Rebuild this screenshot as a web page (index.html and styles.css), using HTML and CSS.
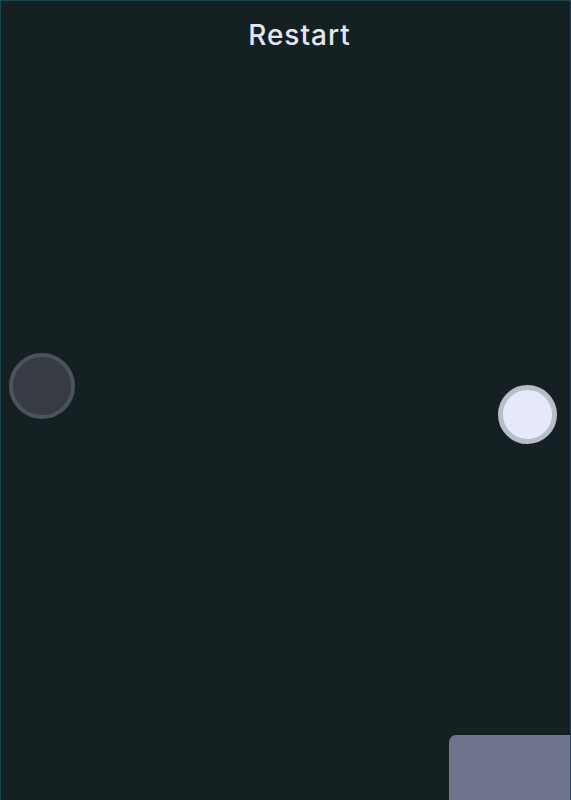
FILE: index.html
```html
<!DOCTYPE html>
<html>
<head>
<meta charset="utf-8">
<link rel="stylesheet" href="styles.css">
</head>
<body>
<div class="stage">
  <header class="top">
    <button class="restart">Restart</button>
  </header>
  <div class="ball ball-dark"></div>
  <div class="ball ball-light"></div>
  <div class="panel"></div>
</div>
</body>
</html>
```
FILE: styles.css
```css
html, body {
  margin: 0;
  padding: 0;
  height: 100%;
  background: #152022;
}
.stage {
  position: relative;
  box-sizing: border-box;
  width: 571px;
  height: 800px;
  border: 1px solid #1d4550;
  border-bottom: none;
  background: #152022;
  overflow: hidden;
}
.top {
  display: flex;
  justify-content: center;
  padding-top: 16px;
  padding-left: 28px;
}
.restart {
  background: none;
  border: none;
  padding: 0;
  color: #e4e7f3;
  font-family: Inter, "Open Sans", sans-serif;
  font-size: 28px;
  font-weight: 500;
  letter-spacing: 1px;
  line-height: 36px;
}
.ball {
  position: absolute;
  box-sizing: border-box;
  border-radius: 50%;
}
.ball-dark {
  left: 8px;
  top: 352px;
  width: 66px;
  height: 66px;
  background: #363b44;
  border: 4px solid #4b545e;
}
.ball-light {
  left: 497px;
  top: 384px;
  width: 59px;
  height: 59px;
  background: #e6e8fc;
  border: 5px solid #b8bdca;
}
.panel {
  position: absolute;
  left: 448px;
  top: 734px;
  width: 123px;
  height: 66px;
  background: #6e748c;
  border-top-left-radius: 7px;
}
```
